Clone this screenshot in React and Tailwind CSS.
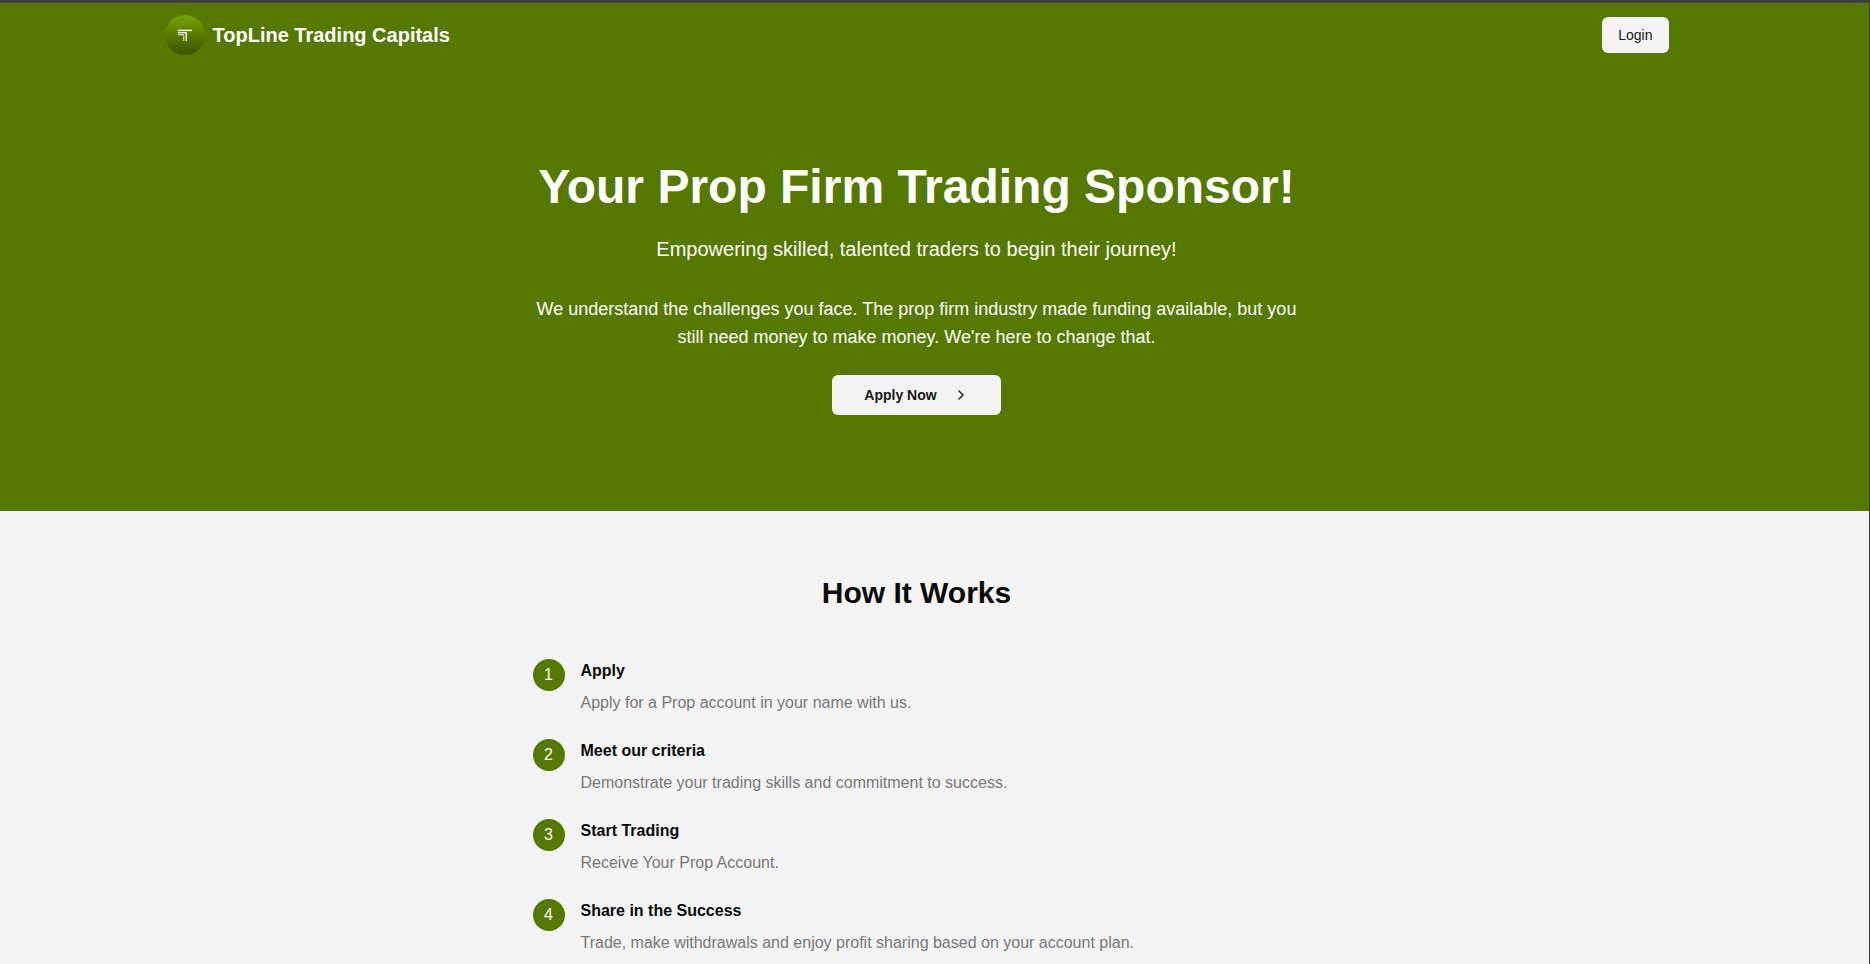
import { ChevronRight } from "lucide-react";

const steps = [
  { title: "Apply", text: "Apply for a Prop account in your name with us." },
  { title: "Meet our criteria", text: "Demonstrate your trading skills and commitment to success." },
  { title: "Start Trading", text: "Receive Your Prop Account." },
  {
    title: "Share in the Success",
    text: "Trade, make withdrawals and enjoy profit sharing based on your account plan.",
  },
];

function Logo() {
  return (
    <svg viewBox="0 0 40 40" className="size-10" aria-hidden="true">
      <defs>
        <linearGradient id="logo-fill" x1="0" y1="0" x2="0" y2="1">
          <stop offset="0" stopColor="#75a500" />
          <stop offset="1" stopColor="#3a5200" />
        </linearGradient>
      </defs>
      <circle cx="20" cy="20" r="20" fill="url(#logo-fill)" />
      <g fill="none" stroke="#ffffff">
        <path d="M12.8 15.4H27" strokeWidth="1.4" />
        <path d="M12.8 17.7h8.5V26" strokeWidth="1.3" />
        <path d="M12.8 19.7h6V26" strokeWidth="1" strokeOpacity="0.9" />
      </g>
    </svg>
  );
}

function Header() {
  return (
    <header className="bg-[#547800] pr-9">
      <div className="mx-auto flex h-16 max-w-[1536px] items-center justify-between px-4">
        <a href="#" className="flex items-center gap-2 text-xl font-bold text-white">
          <Logo />
          TopLine Trading Capitals
        </a>
        <button type="button" className="h-9 rounded-md bg-[#f4f4f4] px-4 text-sm font-medium text-[#171717]">
          Login
        </button>
      </div>
    </header>
  );
}

function Hero() {
  return (
    <section className="bg-[#547800] py-24 pr-9 text-white">
      <div className="mx-auto flex max-w-3xl flex-col items-center text-center">
        <h1 className="text-5xl font-bold">Your Prop Firm Trading Sponsor!</h1>
        <p className="mt-6 text-xl">Empowering skilled, talented traders to begin their journey!</p>
        <p className="mt-8 text-lg">
          We understand the challenges you face. The prop firm industry made funding available, but you still need
          money to make money. We're here to change that.
        </p>
        <button
          type="button"
          className="mt-6 flex h-10 items-center gap-4 rounded-md bg-[#f4f4f4] px-8 text-sm font-semibold text-[#171717]"
        >
          Apply Now
          <ChevronRight className="size-4" aria-hidden="true" />
        </button>
      </div>
    </section>
  );
}

function HowItWorks() {
  return (
    <section className="grow bg-[#f4f4f4] pt-16 pr-9">
      <div className="mx-auto max-w-3xl">
        <h2 className="mb-12 text-center text-3xl font-bold text-[#0a0a0a]">How It Works</h2>
        <ol className="space-y-6">
          {steps.map((step, i) => (
            <li key={step.title} className="flex items-start gap-4">
              <span className="flex size-8 shrink-0 items-center justify-center rounded-full bg-[#547800] text-white">
                {i + 1}
              </span>
              <div>
                <h3 className="mb-2 font-semibold text-[#0a0a0a]">{step.title}</h3>
                <p className="text-[#787878]">{step.text}</p>
              </div>
            </li>
          ))}
        </ol>
      </div>
    </section>
  );
}

export default function App() {
  return (
    <div className="flex min-h-screen flex-col border-t-2 border-r border-[#3d3d3d] font-['Liberation_Sans',Arial,sans-serif]">
      <div className="flex grow flex-col border-t border-[#4a4a4a]">
        <Header />
        <main className="flex grow flex-col">
          <Hero />
          <HowItWorks />
        </main>
      </div>
    </div>
  );
}
